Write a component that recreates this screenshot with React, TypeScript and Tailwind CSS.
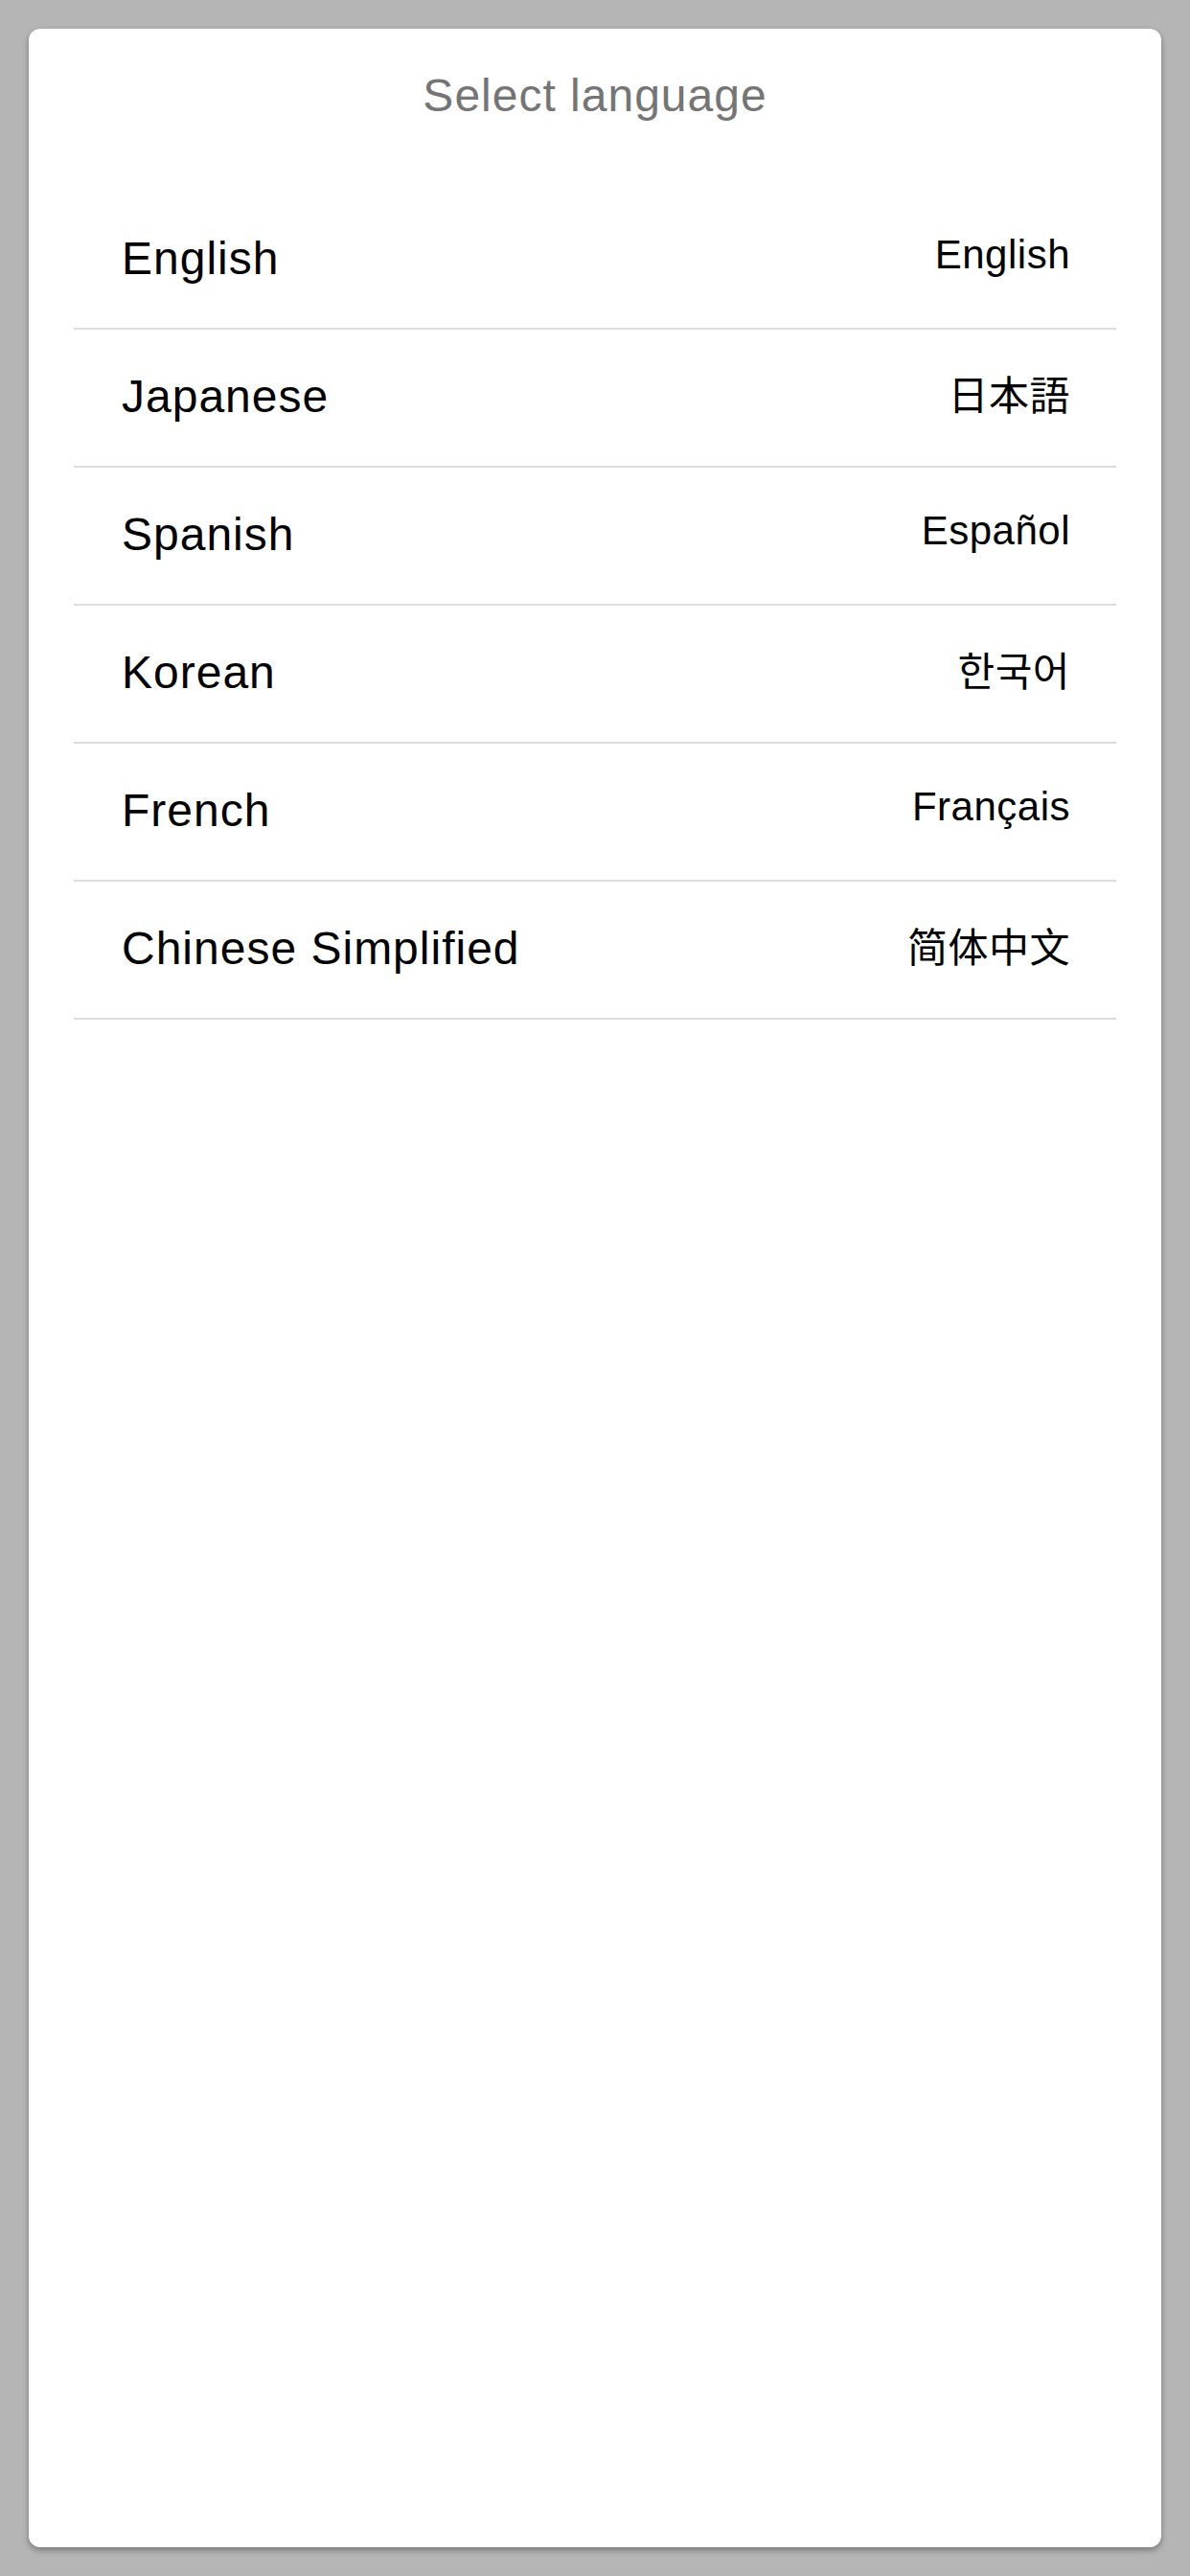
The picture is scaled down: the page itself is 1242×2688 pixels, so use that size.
const languages = [
  { name: "English", native: "English", font: "'Liberation Sans', Arial, sans-serif" },
  { name: "Japanese", native: "日本語", font: "'Noto Sans CJK JP', sans-serif" },
  { name: "Spanish", native: "Español", font: "'Liberation Sans', Arial, sans-serif" },
  { name: "Korean", native: "한국어", font: "'Noto Sans CJK KR', sans-serif" },
  { name: "French", native: "Français", font: "'Liberation Sans', Arial, sans-serif" },
  { name: "Chinese Simplified", native: "简体中文", font: "'Noto Sans CJK SC', sans-serif" },
];

export default function App() {
  return (
    <div
      className="h-screen w-full bg-[#b5b5b5] px-[30px] pt-[30px] pb-[30px]"
      style={{ fontFamily: "'Liberation Sans', Arial, sans-serif" }}
    >
      <div className="flex h-full w-full flex-col rounded-[12px] bg-white shadow-[0_3px_6px_rgba(0,0,0,0.35)]">
        <div className="pt-[42px] pb-[72px] text-center text-[48px] leading-[56px] tracking-[1px] text-[#757575]">
          Select language
        </div>

        <ul className="mx-[47px]">
          {languages.map((lang) => (
            <li
              key={lang.name}
              className="flex h-[144px] items-center justify-between border-b-2 border-[#dcdcdc] pl-[50px] pr-[48px]"
            >
              <span className="pb-[2px] text-[48px] leading-[56px] tracking-[1px] text-black">{lang.name}</span>
              <span
                className="pb-[10px] text-[42px] leading-[50px] tracking-[0.5px] text-black"
                style={{ fontFamily: lang.font }}
              >
                {lang.native}
              </span>
            </li>
          ))}
        </ul>
      </div>
    </div>
  );
}
